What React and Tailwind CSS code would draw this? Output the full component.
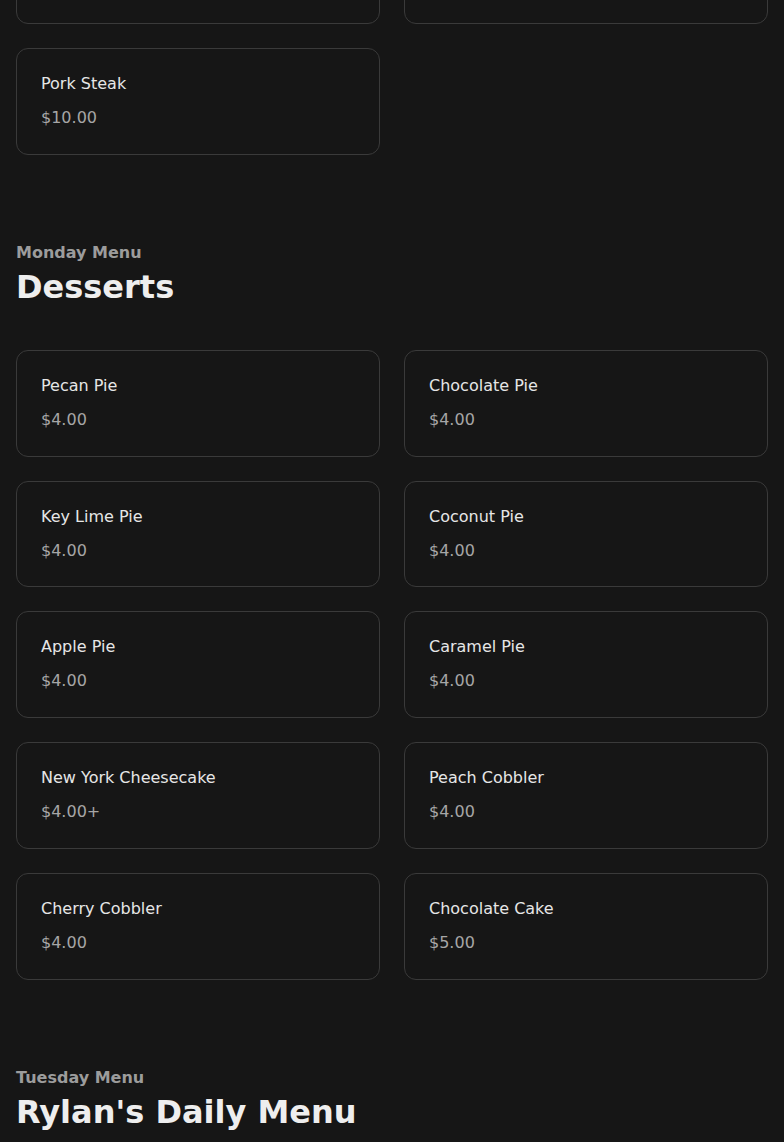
import React from "react";

const mondayMains = [
    { name: "Ribeye Steak", price: "$12.00" },
    { name: "Chicken Fried Steak", price: "$10.00" },
    { name: "Pork Steak", price: "$10.00" },
]

const desserts = [
    { name: "Pecan Pie", price: "$4.00" },
    { name: "Chocolate Pie", price: "$4.00" },
    { name: "Key Lime Pie", price: "$4.00" },
    { name: "Coconut Pie", price: "$4.00" },
    { name: "Apple Pie", price: "$4.00" },
    { name: "Caramel Pie", price: "$4.00" },
    { name: "New York Cheesecake", price: "$4.00+" },
    { name: "Peach Cobbler", price: "$4.00" },
    { name: "Cherry Cobbler", price: "$4.00" },
    { name: "Chocolate Cake", price: "$5.00" },
]

function MenuCard({ item }) {
    return (
        <div className="border border-[#3a3a3a] rounded-xl px-6 pt-[23px] pb-[23.75px] bg-[#161616]">
            <p className="text-base leading-6 text-[#e6e6e6]">{item.name}</p>
            <p className="text-base leading-6 mt-2.5 text-[#a6a6a6]">{item.price}</p>
        </div>
    )
}

function SectionHeader({ label, title }) {
    return (
        <div className="mb-[43px]">
            <p className="text-base leading-6 font-bold text-[#9c9c9c]">{label}</p>
            <h2 className="text-[32px] leading-[40px] font-bold text-[#eeeeee] mt-[1.5px]">{title}</h2>
        </div>
    )
}

export default function App() {
    return (
        <div className="bg-[#161616] min-h-screen h-[1142px] overflow-hidden px-4" style={{ fontFamily: '"DejaVu Sans", sans-serif' }}>
            {/* tail of previous section, page is scrolled */}
            <div className="grid grid-cols-2 gap-6 -mt-[82.75px]">
                {mondayMains.map((item, index) => (
                    <MenuCard key={index} item={item} />
                ))}
            </div>

            <div className="pt-[86.5px]">
                <SectionHeader label="Monday Menu" title="Desserts" />
                <div className="grid grid-cols-2 gap-6">
                    {desserts.map((item, index) => (
                        <MenuCard key={index} item={item} />
                    ))}
                </div>
            </div>

            <div className="pt-[86.5px]">
                <SectionHeader label="Tuesday Menu" title="Rylan's Daily Menu" />
            </div>
        </div>
    )
}
